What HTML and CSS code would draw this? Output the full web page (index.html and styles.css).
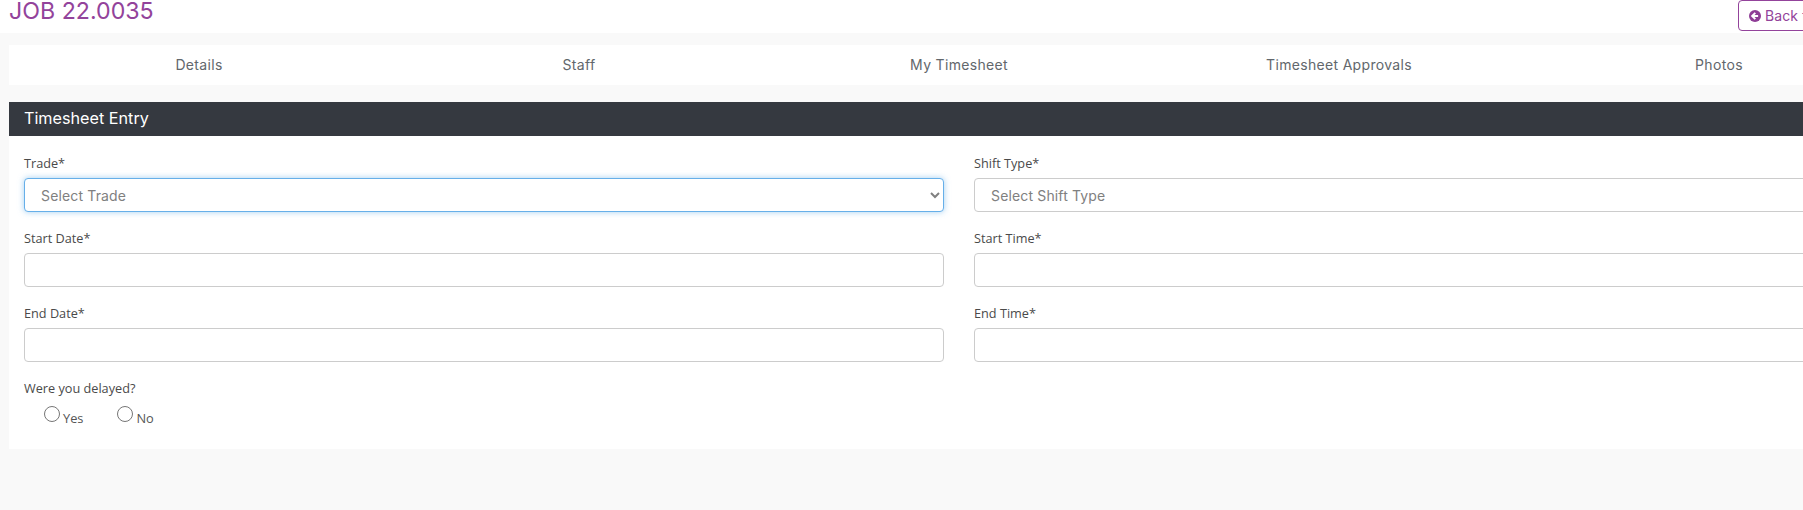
FILE: index.html
```html
<!DOCTYPE html>
<html lang="en">
<head>
    <meta charset="UTF-8">
    <meta name="viewport" content="width=device-width, initial-scale=1.0">
    <title>JOB 22.0035</title>
    <link rel="stylesheet" href="styles.css">
</head>
<body>
    <div class="page">
        <header class="top-bar">
            <h1 class="job-title">JOB 22.0035</h1>
            <a class="back-btn" href="#">
                <svg class="back-icon" viewBox="0 0 12 12">
                    <circle cx="6" cy="6" r="6" fill="#8e3d96"/>
                    <path d="M6.3 2.8 3.1 6l3.2 3.2M3.4 6h5.7" fill="none" stroke="#fff" stroke-width="1.9"/>
                </svg>
                Back to Job
            </a>
        </header>
        <main class="content">
            <nav class="tabs">
                <a href="#">Details</a>
                <a href="#">Staff</a>
                <a href="#">My Timesheet</a>
                <a href="#">Timesheet Approvals</a>
                <a href="#">Photos</a>
            </nav>
            <section class="card">
                <h2 class="card-title">Timesheet Entry</h2>
                <form class="card-body">
                    <div class="form-grid">
                        <div class="field">
                            <label for="trade">Trade*</label>
                            <select id="trade" class="control focused">
                                <option>Select Trade</option>
                            </select>
                        </div>
                        <div class="field">
                            <label for="shiftType">Shift Type*</label>
                            <select id="shiftType" class="control">
                                <option>Select Shift Type</option>
                            </select>
                        </div>
                        <div class="field">
                            <label for="startDate">Start Date*</label>
                            <input id="startDate" class="control" type="text">
                        </div>
                        <div class="field">
                            <label for="startTime">Start Time*</label>
                            <input id="startTime" class="control" type="text">
                        </div>
                        <div class="field">
                            <label for="endDate">End Date*</label>
                            <input id="endDate" class="control" type="text">
                        </div>
                        <div class="field">
                            <label for="endTime">End Time*</label>
                            <input id="endTime" class="control" type="text">
                        </div>
                    </div>
                    <p class="delay-label">Were you delayed?</p>
                    <div class="radios">
                        <label class="radio"><input type="radio" name="delayed"><span class="radio-text">Yes</span></label>
                        <label class="radio"><input type="radio" name="delayed"><span class="radio-text">No</span></label>
                    </div>
                </form>
            </section>
        </main>
    </div>
</body>
</html>
```

FILE: styles.css
```css
html, body {
    margin: 0;
    height: 510px;
    overflow: hidden;
    background: #f9f9f9;
}
.page {
    width: 1910px;
    font-family: "Open Sans", sans-serif;
}
.top-bar {
    display: flex;
    justify-content: space-between;
    align-items: flex-start;
    height: 33px;
    padding: 0 0 0 9px;
    background: #fff;
}
.job-title {
    margin: 0;
    font-family: Inter, sans-serif;
    font-size: 23.2px;
    font-weight: 400;
    line-height: 22px;
    color: #93439b;
}
.back-btn {
    display: flex;
    align-items: center;
    gap: 4px;
    width: 172px;
    height: 31px;
    box-sizing: border-box;
    padding-left: 10px;
    border: 1px solid #93439b;
    border-radius: 4px;
    font-family: Inter, sans-serif;
    font-size: 14px;
    letter-spacing: 0.1px;
    color: #93439b;
    text-decoration: none;
}
.back-icon {
    width: 12px;
    height: 12px;
}
.content {
    padding: 12px 0 0 9px;
}
.tabs {
    display: grid;
    grid-template-columns: repeat(5, 380px);
    height: 40px;
    background: #fff;
}
.tabs a {
    display: flex;
    align-items: center;
    justify-content: center;
    padding-bottom: 1px;
    font-family: Inter, sans-serif;
    font-size: 14px;
    letter-spacing: 0.32px;
    color: #62676c;
    text-decoration: none;
}
.card {
    margin-top: 17px;
    background: #fff;
}
.card-title {
    margin: 0;
    height: 34px;
    padding-left: 15px;
    background: #353940;
    font-family: Inter, sans-serif;
    font-size: 16.2px;
    font-weight: 400;
    line-height: 33px;
    color: #fff;
}
.card-body {
    height: 313px;
    box-sizing: border-box;
    padding: 17px 15px 0;
}
.form-grid {
    display: grid;
    grid-template-columns: 920px 920px;
    column-gap: 30px;
    row-gap: 16px;
}
.field {
    display: flex;
    flex-direction: column;
    gap: 5px;
}
.field label, .delay-label {
    font-size: 12.7px;
    line-height: 20px;
    color: #4a4a4a;
}
.control {
    height: 34px;
    box-sizing: border-box;
    padding: 0 12px;
    border: 1px solid #ccc;
    border-radius: 4px;
    background: #fff;
    font-family: Inter, sans-serif;
    font-size: 14px;
    letter-spacing: 0.15px;
    color: #808080;
}
.focused {
    border-color: #66afe9;
    box-shadow: 0 0 6px rgba(102, 175, 233, 0.6);
}
.delay-label {
    margin: 16px 0 0;
}
.radios {
    display: flex;
    gap: 34px;
    margin-top: 8px;
    padding-left: 20px;
}
.radio {
    display: flex;
    align-items: flex-start;
    gap: 3px;
    font-size: 12.8px;
    line-height: 18px;
    color: #555;
}
.radio input {
    width: 16px;
    height: 16px;
    margin: 0;
}
.radio-text {
    padding-top: 3px;
}
```
